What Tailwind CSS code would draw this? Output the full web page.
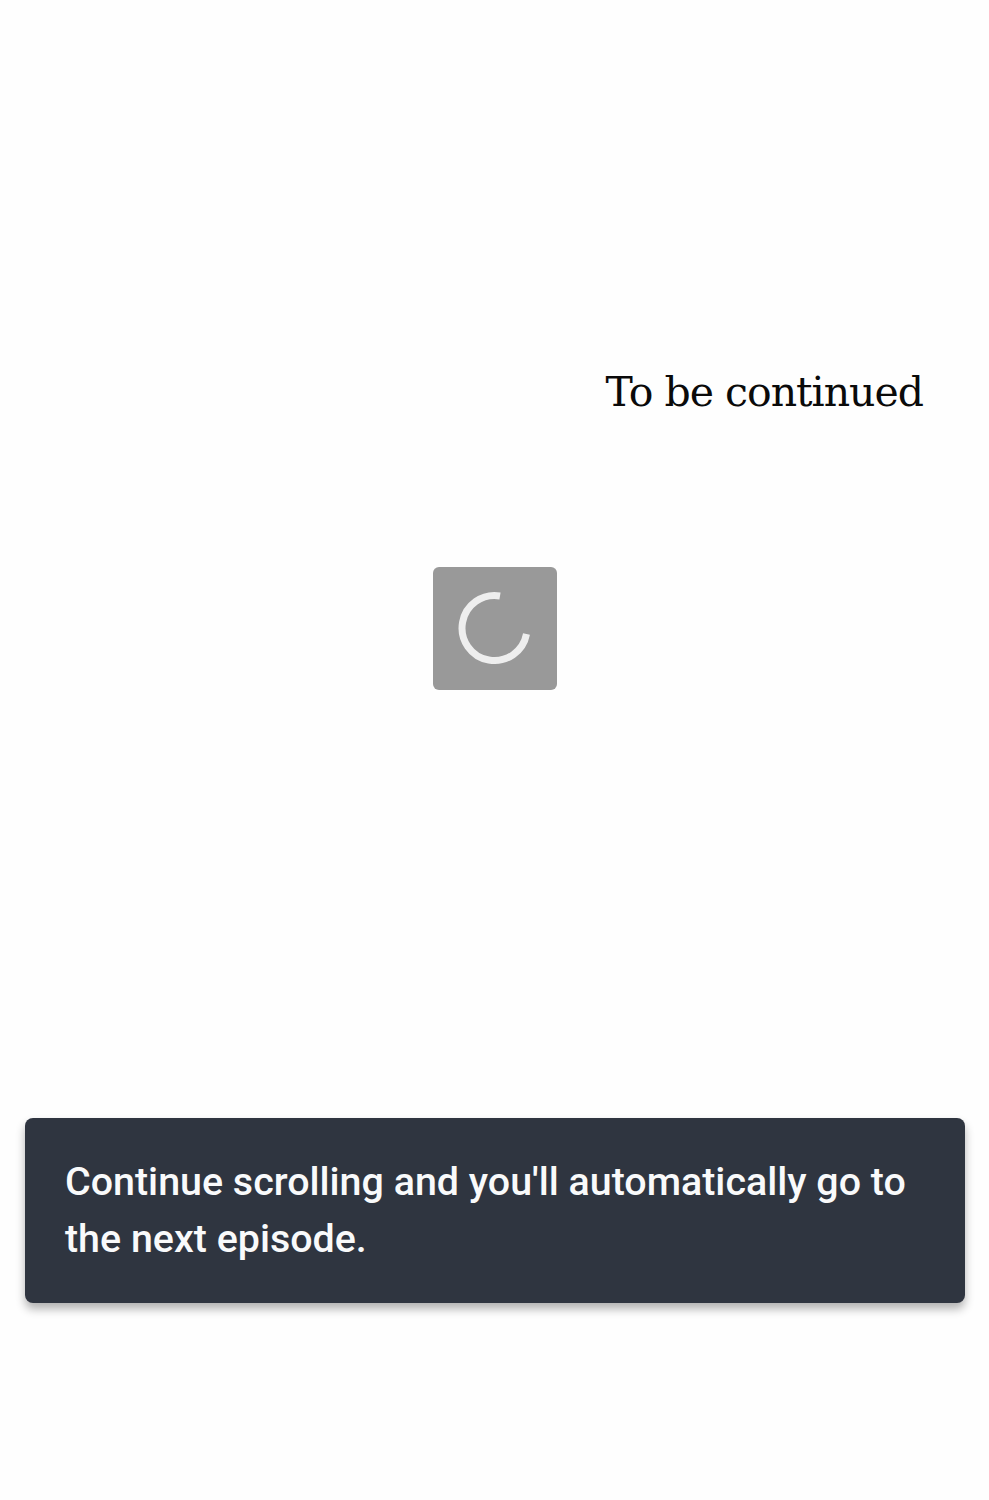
<!DOCTYPE html>
<html lang="en">

<head>
  <meta charset="UTF-8" />
  <meta name="viewport" content="width=device-width, initial-scale=1.0" />
  <title>To be continued</title>
  <script src="https://cdn.jsdelivr.net/npm/@tailwindcss/browser@4"></script>
</head>

<body class="bg-white">

  <main class="h-[1500px] overflow-hidden bg-[#fefefe] pt-[364px]">

    <!-- End of episode -->
    <p class="pr-[66px] text-right font-['DejaVu_Serif',serif] text-[41px] leading-[56px] tracking-[-1px] text-[#0a0a0a]">To be continued</p>

    <!-- Spinner -->
    <div class="mx-auto mt-[147px] flex h-[123px] w-[124px] items-center justify-center rounded-[6px] bg-[#999999]">
      <svg width="124" height="123" viewBox="0 0 124 123" fill="none">
        <path d="M67 29 A32.5 32.5 0 1 0 93.5 67" stroke="#eeeeee" stroke-width="7" />
      </svg>
    </div>

    <!-- Toast -->
    <div class="ml-[25px] mr-[24px] mt-[428px] h-[185px] rounded-[8px] bg-[#2f3540] px-[40px] py-[35px] font-['Roboto',sans-serif] text-[39.4px] leading-[57px] font-medium text-[#f9fafb] shadow-[0_6px_10px_rgba(0,0,0,0.3)]">
      Continue scrolling and you'll automatically go to the next episode.
    </div>

  </main>

</body>

</html>
